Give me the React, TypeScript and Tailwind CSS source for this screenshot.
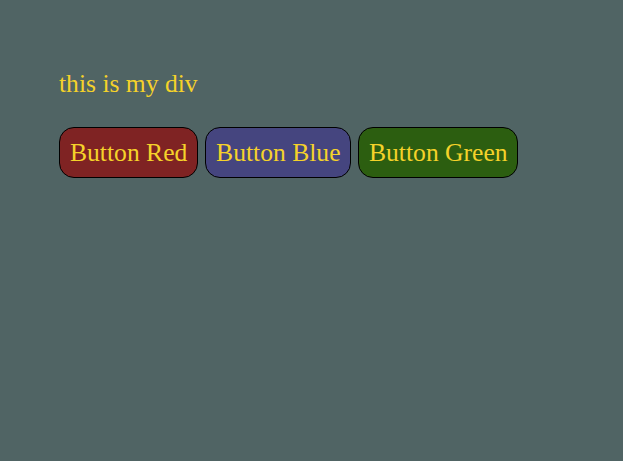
export default function App() {
  return (
    <div className="min-h-[461px] w-full bg-[#506464] pl-[59px] pt-[69px] font-['Liberation_Serif',serif] text-[25.6px] text-[#f5d22a]">
      <div className="leading-[30px]">this is my div</div>
      <div className="mt-[28px] flex gap-[7px]">
        <button className="h-[51px] rounded-[15px] border border-black bg-[#7f2323] px-[10px] leading-[normal]">Button Red</button>
        <button className="h-[51px] w-[146px] rounded-[15px] border border-black bg-[#45457f] px-[9px] leading-[normal]">Button Blue</button>
        <button className="h-[51px] w-[160px] rounded-[15px] border border-black bg-[#2c5e10] px-[9px] leading-[normal]">Button Green</button>
      </div>
    </div>
  );
}
